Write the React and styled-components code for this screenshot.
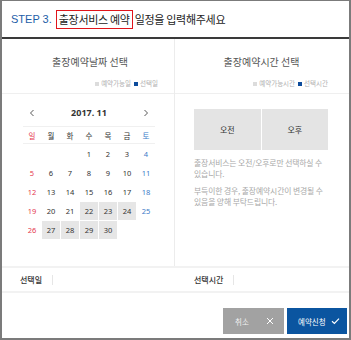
import React from 'react';
import styled, { createGlobalStyle } from 'styled-components';

const GlobalStyle = createGlobalStyle`
  html, body {
    margin: 0;
    padding: 0;
    background: #fff;
  }
  body {
    font-family: 'Noto Sans CJK KR', 'Noto Sans', sans-serif;
  }
`

const Frame = styled.div`
  width: 351px;
  height: 340px;
  box-sizing: border-box;
  border: 2px solid #7b7b7b;
  border-top-width: 1px;
  display: flex;
  flex-direction: column;
  background: #fff;
  overflow: hidden;
`

const Header = styled.div`
  height: 36px;
  flex: none;
  display: flex;
  align-items: center;
  padding-left: 9px;
  border-bottom: 2px solid #3a3a3a;
  font-size: 11px;
  color: #222;
  letter-spacing: -0.3px;
`

const Step = styled.span`
  color: #1d5ea8;
  margin-right: 4px;
  font-family: 'Liberation Sans', sans-serif;
  font-size: 11px;
  letter-spacing: 0;
`

const Marked = styled.span`
  border: 1.5px solid #e0151b;
  padding: 1px 2px;
  margin-right: 2px;
  line-height: 15px;
`

const Columns = styled.div`
  height: 227px;
  flex: none;
  display: grid;
  grid-template-columns: 172px 1fr;
`

const Column = styled.div`
  display: flex;
  flex-direction: column;
  border-left: ${p => (p.$divided ? '1px solid #ececec' : 'none')};
`

const ColumnHead = styled.div`
  height: 55px;
  box-sizing: border-box;
  border-bottom: 1px solid #efefef;
  padding: 16px ${p => p.$right}px 0 20px;
  display: flex;
  flex-direction: column;
`

const ColumnTitle = styled.div`
  text-align: center;
  font-size: 10px;
  line-height: 14px;
  color: #555;
`

const Legend = styled.div`
  margin-top: 9px;
  display: flex;
  justify-content: flex-end;
  align-items: center;
  gap: 3px;
  font-size: 6.5px;
  line-height: 10px;
  color: #b0b0b0;
`

const Swatch = styled.i`
  display: inline-block;
  width: 4px;
  height: 4px;
  margin-right: 2px;
  background: ${p => p.$color};
`

const Calendar = styled.div`
  padding: 0 19px 0 21px;
`

const NavRow = styled.div`
  height: 33px;
  box-sizing: border-box;
  padding: 13px 6px 0;
  display: flex;
  justify-content: space-between;
  align-items: flex-start;
  border-bottom: 1px solid #f0f0f0;
`

const Month = styled.div`
  font-size: 9px;
  line-height: 12px;
  font-weight: 700;
  color: #333;
  font-family: 'Noto Sans', sans-serif;
`

const Arrow = styled.svg`
  width: 6px;
  height: 12px;
`

const Grid = styled.div`
  display: grid;
  grid-template-columns: repeat(7, 1fr);
  column-gap: 1px;
  row-gap: 1px;
`

const WeekRow = styled(Grid)`
  height: 16px;
  border-bottom: 1px solid #f0f0f0;
  margin-bottom: 1px;
`

const colorFor = day => (day === 0 ? '#e5394f' : day === 6 ? '#3c7bc8' : '#333')

const WeekCell = styled.div`
  display: flex;
  align-items: center;
  justify-content: center;
  font-size: 7.5px;
  color: ${p => colorFor(p.$day)};
`

const DayCell = styled.div`
  height: 18px;
  display: flex;
  align-items: center;
  justify-content: center;
  font-size: 7.5px;
  font-family: 'Noto Sans', sans-serif;
  color: ${p => colorFor(p.$day)};
  background: ${p => (p.$open ? '#e6e6e6' : 'transparent')};
`

const TimeBody = styled.div`
  padding: 15px 21px 0 19px;
`

const TimeButtons = styled.div`
  display: grid;
  grid-template-columns: 1fr 1fr;
  column-gap: 1px;
  height: 41px;
`

const TimeButton = styled.div`
  background: #e4e4e4;
  display: flex;
  align-items: center;
  justify-content: center;
  font-size: 8px;
  color: #333;
`

const Note = styled.p`
  margin: ${p => (p.$first ? '7px' : '6px')} 0 0;
  font-size: 7.8px;
  line-height: 11px;
  color: #a8a8a8;
  letter-spacing: -0.1px;
`

const SelectionBar = styled.div`
  height: 27px;
  flex: none;
  box-sizing: border-box;
  border-top: 2px solid #f2f2f2;
  border-bottom: 2px solid #f2f2f2;
  display: grid;
  grid-template-columns: 172px 1fr;
`

const Selection = styled.div`
  display: flex;
  align-items: center;
  padding-left: ${p => p.$left}px;
`

const SelectionLabel = styled.span`
  font-size: 8px;
  color: #333;
  font-weight: 500;
  padding-right: 10px;
  border-right: 1px solid #e6e6e6;
  line-height: 10px;
`

const Footer = styled.div`
  flex: 1;
  display: flex;
  justify-content: flex-end;
  align-items: flex-start;
  gap: 3px;
  padding: 15px 2px 0 0;
`

const ActionButton = styled.div`
  width: ${p => p.$width}px;
  height: 26px;
  box-sizing: border-box;
  background: ${p => p.$bg};
  color: ${p => p.$fg};
  display: flex;
  align-items: center;
  justify-content: space-between;
  padding: 0 ${p => p.$pr}px 0 ${p => p.$pl}px;
  font-size: 7.5px;
`

const days = [
  null, null, null, 1, 2, 3, 4,
  5, 6, 7, 8, 9, 10, 11,
  12, 13, 14, 15, 16, 17, 18,
  19, 20, 21, 22, 23, 24, 25,
  26, 27, 28, 29, 30, null, null,
]

const openDays = [22, 23, 24, 27, 28, 29, 30]

export default function App() {
  return (
    <>
      <GlobalStyle />
      <Frame>
        <Header>
          <Step>STEP 3.</Step>
          <Marked>출장서비스 예약</Marked>
          일정을 입력해주세요
        </Header>
        <Columns>
          <Column>
            <ColumnHead $right={16}>
              <ColumnTitle>출장예약날짜 선택</ColumnTitle>
              <Legend>
                <span><Swatch $color="#dcdcdc" />예약가능일</span>
                <span><Swatch $color="#0d4c9c" />선택일</span>
              </Legend>
            </ColumnHead>
            <Calendar>
              <NavRow>
                <Arrow viewBox="0 0 6 12">
                  <polyline points="4.5,3 1.5,6 4.5,9" fill="none" stroke="#444" strokeWidth="0.9" />
                </Arrow>
                <Month>2017. 11</Month>
                <Arrow viewBox="0 0 6 12">
                  <polyline points="1.5,3 4.5,6 1.5,9" fill="none" stroke="#444" strokeWidth="0.9" />
                </Arrow>
              </NavRow>
              <WeekRow>
                {['일', '월', '화', '수', '목', '금', '토'].map((w, i) => (
                  <WeekCell key={w} $day={i}>{w}</WeekCell>
                ))}
              </WeekRow>
              <Grid>
                {days.map((d, i) => (
                  <DayCell key={i} $day={i % 7} $open={openDays.includes(d)}>
                    {d}
                  </DayCell>
                ))}
              </Grid>
            </Calendar>
          </Column>
          <Column $divided>
            <ColumnHead $right={21}>
              <ColumnTitle>출장예약시간 선택</ColumnTitle>
              <Legend>
                <span><Swatch $color="#dcdcdc" />예약가능시간</span>
                <span><Swatch $color="#0d4c9c" />선택시간</span>
              </Legend>
            </ColumnHead>
            <TimeBody>
              <TimeButtons>
                <TimeButton>오전</TimeButton>
                <TimeButton>오후</TimeButton>
              </TimeButtons>
              <Note $first>출장서비스는 오전/오후로만 선택하실 수<br />있습니다.</Note>
              <Note>부득이한 경우, 출장예약시간이 변경될 수<br />있음을 양해 부탁드립니다.</Note>
            </TimeBody>
          </Column>
        </Columns>
        <SelectionBar>
          <Selection $left={18}>
            <SelectionLabel>선택일</SelectionLabel>
          </Selection>
          <Selection $left={20}>
            <SelectionLabel>선택시간</SelectionLabel>
          </Selection>
        </SelectionBar>
        <Footer>
          <ActionButton $width={61} $bg="#a2a2a2" $fg="#f0f0f0" $pl={12} $pr={10}>
            취소
            <svg width="8" height="8" viewBox="0 0 8 8">
              <path d="M1 1 L7 7 M7 1 L1 7" stroke="#fff" strokeWidth="1" />
            </svg>
          </ActionButton>
          <ActionButton $width={60} $bg="#0b55a0" $fg="#fff" $pl={11} $pr={7}>
            예약신청
            <svg width="9" height="8" viewBox="0 0 9 8">
              <polyline points="1,4.2 3.4,6.4 8,1.6" fill="none" stroke="#fff" strokeWidth="1.2" />
            </svg>
          </ActionButton>
        </Footer>
      </Frame>
    </>
  );
}
